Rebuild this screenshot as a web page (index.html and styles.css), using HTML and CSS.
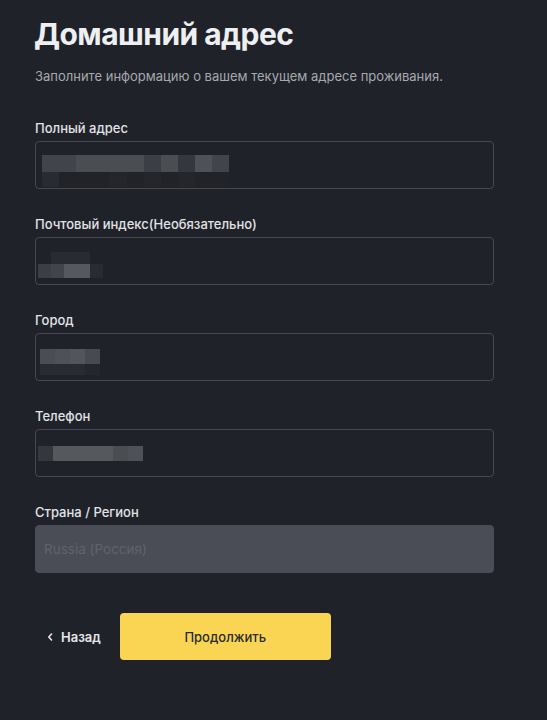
FILE: index.html
```html
<!DOCTYPE html>
<html lang="ru">
<head>
<meta charset="utf-8">
<title>Домашний адрес</title>
<link rel="stylesheet" href="styles.css">
</head>
<body>
<main class="page">
  <h1 class="title">Домашний адрес</h1>
  <p class="subtitle">Заполните информацию о вашем текущем адресе проживания.</p>

  <div class="field">
    <label class="label">Полный адрес</label>
    <div class="input">
      <div class="blur blur-addr">
        <div class="row r17">
          <i class="c a3"></i><i class="c a3"></i><i class="c a4"></i><i class="c a4"></i><i class="c a4"></i><i class="c a4"></i><i class="c a2"></i><i class="c a4"></i><i class="c a1"></i><i class="c a5"></i><i class="c a3"></i>
        </div>
        <div class="row r15">
          <i class="c d2"></i><i class="c d0"></i><i class="c d0"></i><i class="c d0"></i><i class="c d1"></i><i class="c d0"></i><i class="c d1"></i><i class="c d0"></i><i class="c d1"></i><i class="c d0"></i><i class="c d0"></i>
        </div>
      </div>
    </div>
  </div>

  <div class="field">
    <label class="label">Почтовый индекс(Необязательно)</label>
    <div class="input">
      <div class="blur blur-zip">
        <div class="row r12 shift">
          <i class="c d2"></i><i class="c d2"></i><i class="c d2"></i>
        </div>
        <div class="row r14">
          <i class="c a2"></i><i class="c a3"></i><i class="c a6"></i><i class="c a6"></i><i class="c d2"></i>
        </div>
      </div>
    </div>
  </div>

  <div class="field">
    <label class="label">Город</label>
    <div class="input">
      <div class="blur blur-city">
        <div class="row r15">
          <i class="c a4"></i><i class="c a5"></i><i class="c a5b"></i><i class="c a3b"></i>
        </div>
        <div class="row r11">
          <i class="c d2"></i><i class="c d2"></i><i class="c d2"></i><i class="c d1"></i>
        </div>
      </div>
    </div>
  </div>

  <div class="field">
    <label class="label">Телефон</label>
    <div class="input">
      <div class="blur blur-phone">
        <div class="row r15">
          <i class="c a1"></i><i class="c a6"></i><i class="c a6"></i><i class="c a6"></i><i class="c a6"></i><i class="c a4"></i><i class="c a5"></i>
        </div>
      </div>
    </div>
  </div>

  <div class="field">
    <label class="label">Страна / Регион</label>
    <div class="input input-disabled">Russia (Россия)</div>
  </div>

  <div class="actions">
    <button class="back" type="button">
      <svg width="6" height="8" viewBox="0 0 6 8" aria-hidden="true"><path d="M4.5 1 L1.8 4 L4.5 7" fill="none" stroke="#e6e6e8" stroke-width="1.6" stroke-linecap="round" stroke-linejoin="round"/></svg>
      <span>Назад</span>
    </button>
    <button class="next" type="button">Продолжить</button>
  </div>
</main>
</body>
</html>
```

FILE: styles.css
```css
* { box-sizing: border-box; }

html, body {
  margin: 0;
  padding: 0;
  background: #202229;
}

body {
  font-family: "Inter", "Noto Sans", "Liberation Sans", sans-serif;
  color: #e4e5e8;
}

.page {
  width: 459px;
  margin-left: 35px;
  padding-top: 15px;
  display: flex;
  flex-direction: column;
}

.title {
  margin: 0 0 0 -1px;
  font-size: 30px;
  line-height: 38px;
  font-weight: 700;
  color: #eeeff1;
  letter-spacing: -0.55px;
}

.subtitle {
  margin: 14px 0 0;
  font-size: 13px;
  line-height: 18px;
  color: #a7a9ae;
}

.field {
  display: flex;
  flex-direction: column;
  gap: 4px;
  margin-top: 26px;
}

.subtitle + .field { margin-top: 34px; }

.label {
  font-size: 13px;
  line-height: 18px;
  font-weight: 500;
  color: #e2e3e6;
}

.input {
  height: 48px;
  border: 1px solid #464952;
  border-radius: 4px;
  display: flex;
  align-items: center;
}

.input-disabled {
  border-color: #4a4d56;
  background: #4a4d56;
  padding-left: 8px;
  font-size: 13.5px;
  color: #60636b;
}

.blur {
  display: flex;
  flex-direction: column;
}

.row { display: flex; }
.row .c { display: block; }

.blur-addr { margin-left: 6px; margin-top: 12px; }
.blur-addr .c { width: 17px; }
.blur-zip { margin-left: 2px; margin-top: 8px; }
.blur-zip .c { width: 13px; }
.blur-zip .shift { margin-left: 13px; }
.blur-city { margin-left: 4px; margin-top: 10px; }
.blur-city .c { width: 15px; }
.blur-phone { margin-left: 2px; margin-top: 0; }
.blur-phone .c { width: 15px; }

.r17 .c { height: 17px; }
.r15 .c { height: 15px; }
.r14 .c { height: 14px; }
.r12 .c { height: 12px; }
.r11 .c { height: 11px; }

.a1 { background: #34373d; }
.a2 { background: #3b3e44; }
.a3 { background: #41444a; }
.a3b { background: #474a50; }
.a4 { background: #4a4d52; }
.a5 { background: #4e5157; }
.a5b { background: #52555c; }
.a6 { background: #55585d; }
.d0 { background: #212329; }
.d1 { background: #24262c; }
.d2 { background: #292b32; }

.actions {
  display: flex;
  align-items: center;
  margin-top: 40px;
  padding-left: 12px;
  gap: 19px;
}

.back {
  display: flex;
  align-items: center;
  gap: 8px;
  background: none;
  border: 0;
  padding: 0;
  font-family: inherit;
  font-size: 13px;
  font-weight: 600;
  color: #e6e7ea;
  cursor: pointer;
}

.next {
  width: 211px;
  height: 47px;
  border: 0;
  border-radius: 4px;
  background: #f9d553;
  font-family: inherit;
  font-size: 13px;
  font-weight: 500;
  color: #2a2b2e;
  cursor: pointer;
}
```
